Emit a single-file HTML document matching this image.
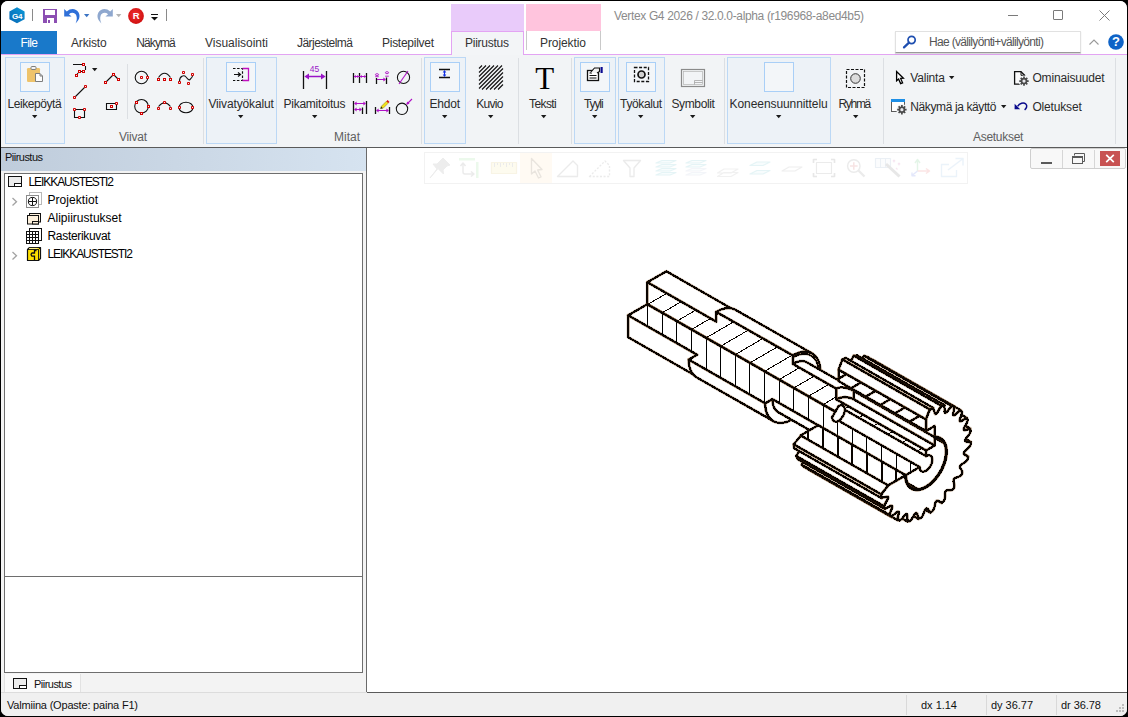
<!DOCTYPE html>
<html lang="fi">
<head>
<meta charset="utf-8">
<title>Vertex G4 2026 / 32.0.0-alpha (r196968-a8ed4b5)</title>
<style>
html,body{margin:0;padding:0;background:#000;width:1128px;height:717px;overflow:hidden}
body{font-family:"Liberation Sans",sans-serif;font-size:12px;color:#222}
#win{position:absolute;left:1px;top:1px;width:1125.5px;height:715px;background:#fff;border-radius:7px;overflow:hidden}
#win *{box-sizing:border-box}
.a{position:absolute}
.t{position:absolute;white-space:pre;font-family:"Liberation Sans",sans-serif}
svg{position:absolute;overflow:visible}
/* coordinates inside #win are offset by -1,-1 via #o */
#o{position:absolute;left:-1px;top:-1px;width:1128px;height:717px}
.grp{position:absolute;border:1px solid #bcd8f5;background:#edf2f7}
.ibox{position:absolute;border:1px solid #a9cff7;background:#f3f6f9;width:30px;height:30px}
.vsep{position:absolute;width:1px;background:#dcdfe3}
.dd{position:absolute;width:0;height:0;border-left:3px solid transparent;border-right:3px solid transparent;border-top:3px solid #222}
</style>
</head>
<body>
<div id="win"><div id="o">

<!-- ===== title bar ===== -->
<div class="a" style="left:0;top:0;width:1128px;height:31px;background:#fff"></div>
<div class="a" style="left:451px;top:4px;width:73px;height:27px;background:#e9cbfa"></div>
<div class="a" style="left:526px;top:4px;width:75px;height:27px;background:#ffc4dd"></div>
<!-- G4 logo -->
<svg style="left:9px;top:7px" width="16" height="17" viewBox="0 0 16 17">
 <defs><linearGradient id="g4g" x1="0" y1="1" x2="1" y2="0"><stop offset="0" stop-color="#0966b4"/><stop offset="1" stop-color="#0a9ad8"/></linearGradient></defs>
 <polygon points="8,0.3 15.6,4.4 15.6,12.2 8,16.3 0.4,12.2 0.4,4.4" fill="url(#g4g)"/>
 <text x="8" y="11.6" font-family="Liberation Sans, sans-serif" font-size="8" font-weight="bold" fill="#fff" text-anchor="middle" letter-spacing="-0.4">G4</text>
</svg>
<div class="a" style="left:32px;top:9px;width:1px;height:12px;background:#8a8a8a"></div>
<!-- save -->
<svg style="left:43px;top:9px" width="14" height="14" viewBox="0 0 14 14" shape-rendering="crispEdges">
 <rect x="0" y="0" width="14" height="14" fill="#8c4fb3"/>
 <rect x="2" y="1" width="10" height="5" fill="#fff"/>
 <rect x="4" y="9" width="7" height="5" fill="#fff"/>
 <rect x="5" y="11" width="2" height="3" fill="#8c4fb3"/>
</svg>
<!-- undo -->
<svg style="left:64px;top:8px" width="17" height="16" viewBox="0 0 17 16">
 <path d="M0.2,1 L0.2,8.6 L7.6,8.6 L4.9,6.2 C7.6,3.9 11.2,4.6 12.3,7.6 C13.3,10.4 12.7,13.2 11.6,15.4 C15.2,12.4 16.6,8.2 14.6,4.6 C12.2,0.4 6.6,-0.2 2.8,3.6 Z" fill="#2f70d8"/>
</svg>
<svg style="left:84px;top:14px" width="6" height="4"><polygon points="0,0 5.4,0 2.7,3.2" fill="#3b74c4"/></svg>
<!-- redo -->
<svg style="left:96px;top:8px" width="17" height="16" viewBox="0 0 17 16">
 <path transform="translate(17,0) scale(-1,1)" d="M0.2,1 L0.2,8.6 L7.6,8.6 L4.9,6.2 C7.6,3.9 11.2,4.6 12.3,7.6 C13.3,10.4 12.7,13.2 11.6,15.4 C15.2,12.4 16.6,8.2 14.6,4.6 C12.2,0.4 6.6,-0.2 2.8,3.6 Z" fill="#8fa8cf"/>
</svg>
<svg style="left:116px;top:14px" width="6" height="4"><polygon points="0,0 5.4,0 2.7,3.2" fill="#b4b4b4"/></svg>
<!-- R -->
<svg style="left:128px;top:8px" width="16" height="16" viewBox="0 0 16 16">
 <defs><radialGradient id="rg" cx="0.45" cy="0.4" r="0.6"><stop offset="0" stop-color="#f03030"/><stop offset="1" stop-color="#d01010"/></radialGradient></defs>
 <circle cx="8" cy="8" r="7.9" fill="url(#rg)"/>
 <text x="8.2" y="11.4" font-family="Liberation Sans, sans-serif" font-size="9.5" font-weight="bold" fill="#fff" text-anchor="middle">R</text>
</svg>
<!-- customize -->
<div class="a" style="left:151px;top:14px;width:7px;height:1px;background:#111"></div>
<svg style="left:151px;top:17px" width="8" height="4"><polygon points="0,0 7,0 3.5,3.5" fill="#111"/></svg>
<div class="a" style="left:166px;top:9px;width:1px;height:12px;background:#8a8a8a"></div>
<span class="t" style="left:614.00px;top:10.00px;font-size:12px;line-height:12px;letter-spacing:-0.352px;color:#8b8b8b;">Vertex G4 2026 / 32.0.0-alpha (r196968-a8ed4b5)</span>
<!-- window controls -->
<div class="a" style="left:1008px;top:15px;width:10px;height:1px;background:#7a7a7a"></div>
<div class="a" style="left:1053px;top:10px;width:10px;height:10px;border:1px solid #7a7a7a;border-radius:1px"></div>
<svg style="left:1099px;top:10px" width="11" height="11" viewBox="0 0 11 11"><path d="M0.5,0.5 L10.5,10.5 M10.5,0.5 L0.5,10.5" stroke="#7a7a7a" stroke-width="1" fill="none"/></svg>


<!-- ===== tab row ===== -->
<div class="a" style="left:1px;top:31px;width:56px;height:23px;background:#1979ca"></div>
<div class="a" style="left:1px;top:54px;width:1126px;height:1px;background:#e3a4f3"></div>
<div class="a" style="left:451px;top:31px;width:73px;height:24px;background:#f3f5f7;border:1px solid #e3a4f3;border-bottom:none"></div>
<div class="a" style="left:526px;top:31px;width:1px;height:19px;background:#c9c9c9"></div>
<div class="a" style="left:600px;top:31px;width:1px;height:19px;background:#c9c9c9"></div>
<span class="t" style="left:20.50px;top:37.00px;font-size:12px;line-height:12px;letter-spacing:-0.615px;color:#fff;">File</span>
<span class="t" style="left:71.00px;top:37.00px;font-size:12px;line-height:12px;letter-spacing:-0.165px;color:#333;">Arkisto</span>
<span class="t" style="left:136.20px;top:37.00px;font-size:12px;line-height:12px;letter-spacing:-0.883px;color:#333;">Näkymä</span>
<span class="t" style="left:205.00px;top:37.00px;font-size:12px;line-height:12px;letter-spacing:-0.013px;color:#333;">Visualisointi</span>
<span class="t" style="left:297.00px;top:37.00px;font-size:12px;line-height:12px;letter-spacing:-0.536px;color:#333;">Järjestelmä</span>
<span class="t" style="left:382.00px;top:37.00px;font-size:12px;line-height:12px;letter-spacing:-0.270px;color:#333;">Pistepilvet</span>
<span class="t" style="left:465.00px;top:37.00px;font-size:12px;line-height:12px;letter-spacing:-0.252px;color:#333;">Piirustus</span>
<span class="t" style="left:540.00px;top:37.00px;font-size:12px;line-height:12px;letter-spacing:-0.086px;color:#333;">Projektio</span>
<div class="a" style="left:895px;top:31px;width:186px;height:22px;background:#fff;border:1px solid #e1e1e1;border-bottom-color:#9a9a9a;box-shadow:0 1px 1px rgba(0,0,0,.15)"></div>
<svg style="left:903px;top:35px" width="14" height="14" viewBox="0 0 14 14"><circle cx="8.6" cy="5" r="3.6" fill="none" stroke="#1f4fb0" stroke-width="1.7"/><path d="M6,7.6 L1,12.4" stroke="#1f4fb0" stroke-width="2.2" stroke-linecap="round"/></svg>
<span class="t" style="left:929.00px;top:36.00px;font-size:12px;line-height:12px;letter-spacing:-0.669px;color:#555;">Hae (välilyönti+välilyönti)</span>
<svg style="left:1088px;top:38px" width="12" height="8" viewBox="0 0 12 8"><path d="M1.5,6.500 L6,2 L10.5,6.500" stroke="#9a9a9a" stroke-width="1.1" fill="none"/></svg>
<svg style="left:1107px;top:33px" width="18" height="18" viewBox="0 0 18 18"><circle cx="9" cy="9" r="7.8" fill="#0f63c7"/><text x="9" y="13.4" font-family="Liberation Sans, sans-serif" font-size="13" font-weight="bold" fill="#fff" text-anchor="middle">?</text></svg>


<!-- ===== ribbon ===== -->
<div class="a" style="left:1px;top:55px;width:1126px;height:92px;background:#f2f4f6"></div>
<div class="a" style="left:1px;top:147px;width:1126px;height:1px;background:#5a5a5a"></div>
<!-- group boxes -->
<div class="grp" style="left:5px;top:57px;width:60px;height:87px"></div>
<div class="grp" style="left:206px;top:57px;width:71px;height:87px"></div>
<div class="grp" style="left:424px;top:57px;width:42px;height:87px"></div>
<div class="grp" style="left:574px;top:57px;width:42px;height:87px"></div>
<div class="grp" style="left:618px;top:57px;width:47px;height:87px"></div>
<div class="grp" style="left:727px;top:57px;width:104px;height:87px"></div>
<!-- icon frames -->
<div class="ibox" style="left:20px;top:62px"></div>
<div class="ibox" style="left:226px;top:62px"></div>
<div class="ibox" style="left:430px;top:62px"></div>
<div class="ibox" style="left:580px;top:62px"></div>
<div class="ibox" style="left:626px;top:62px"></div>
<div class="ibox" style="left:764px;top:62px"></div>
<!-- separators -->
<div class="vsep" style="left:203px;top:58px;height:86px"></div>
<div class="vsep" style="left:421px;top:58px;height:86px"></div>
<div class="vsep" style="left:518px;top:58px;height:86px"></div>
<div class="vsep" style="left:571px;top:58px;height:86px"></div>
<div class="vsep" style="left:724px;top:58px;height:86px"></div>
<div class="vsep" style="left:883px;top:58px;height:86px"></div>
<div class="vsep" style="left:1115px;top:58px;height:86px"></div>
<div class="vsep" style="left:127px;top:64px;height:55px"></div>
<!-- big labels -->
<span class="t" style="left:7.50px;top:98.00px;font-size:12px;line-height:12px;letter-spacing:-0.427px;color:#2b2b2b;">Leikepöytä</span>
<span class="t" style="left:208.40px;top:98.00px;font-size:12px;line-height:12px;letter-spacing:-0.138px;color:#2b2b2b;">Viivatyökalut</span>
<span class="t" style="left:283.50px;top:98.00px;font-size:12px;line-height:12px;letter-spacing:-0.244px;color:#2b2b2b;">Pikamitoitus</span>
<span class="t" style="left:429.40px;top:98.00px;font-size:12px;line-height:12px;letter-spacing:-0.190px;color:#2b2b2b;">Ehdot</span>
<span class="t" style="left:476.20px;top:98.00px;font-size:12px;line-height:12px;letter-spacing:-0.683px;color:#2b2b2b;">Kuvio</span>
<span class="t" style="left:529.00px;top:98.00px;font-size:12px;line-height:12px;letter-spacing:-0.597px;color:#2b2b2b;">Teksti</span>
<span class="t" style="left:584.00px;top:98.00px;font-size:12px;line-height:12px;letter-spacing:-1.100px;color:#2b2b2b;">Tyyli</span>
<span class="t" style="left:620.10px;top:98.00px;font-size:12px;line-height:12px;letter-spacing:-0.386px;color:#2b2b2b;">Työkalut</span>
<span class="t" style="left:671.40px;top:98.00px;font-size:12px;line-height:12px;letter-spacing:-0.359px;color:#2b2b2b;">Symbolit</span>
<span class="t" style="left:729.60px;top:98.00px;font-size:12px;line-height:12px;letter-spacing:-0.083px;color:#2b2b2b;">Koneensuunnittelu</span>
<span class="t" style="left:838.40px;top:98.00px;font-size:12px;line-height:12px;letter-spacing:-1.279px;color:#2b2b2b;">Ryhmä</span>
<span class="t" style="left:910.30px;top:72.00px;font-size:12px;line-height:12px;letter-spacing:-0.202px;color:#2b2b2b;">Valinta</span>
<span class="t" style="left:910.30px;top:101.00px;font-size:12px;line-height:12px;letter-spacing:-0.390px;color:#2b2b2b;">Näkymä ja käyttö</span>
<span class="t" style="left:1032.40px;top:72.00px;font-size:12px;line-height:12px;letter-spacing:-0.159px;color:#2b2b2b;">Ominaisuudet</span>
<span class="t" style="left:1032.40px;top:101.00px;font-size:12px;line-height:12px;letter-spacing:-0.163px;color:#2b2b2b;">Oletukset</span>
<span class="t" style="left:119.00px;top:131.00px;font-size:12px;line-height:12px;letter-spacing:-0.228px;color:#606060;">Viivat</span>
<span class="t" style="left:334.00px;top:131.00px;font-size:12px;line-height:12px;letter-spacing:-0.004px;color:#606060;">Mitat</span>
<span class="t" style="left:973.00px;top:131.00px;font-size:12px;line-height:12px;letter-spacing:-0.288px;color:#606060;">Asetukset</span>
<!-- T icon -->
<span class="t" style="left:535.2px;top:61px;font-family:'Liberation Serif',serif;font-size:31px;line-height:36px;color:#000">T</span>

<svg style="left:0;top:0" width="1128" height="717" viewBox="0 0 1128 717">
<defs>
 <g id="ms"><rect x="-1.5" y="-1.5" width="3" height="3" fill="#d10000"/><rect x="-0.5" y="-0.5" width="1" height="1" fill="#fbeaea"/></g>
 <g id="mc"><rect x="-1.5" y="-1.5" width="3" height="3" rx="0.9" fill="#d10000"/><rect x="-0.5" y="-0.5" width="1" height="1" fill="#fbeaea"/></g>
 <polygon id="da" points="0,0 5.4,0 2.7,3.2" fill="#1a1a1a"/>
</defs>
<!-- dropdown arrows under big labels -->
<g>
<use href="#da" x="32" y="115"/><use href="#da" x="238" y="115"/><use href="#da" x="312" y="115"/>
<use href="#da" x="442" y="115"/><use href="#da" x="488" y="115"/><use href="#da" x="541" y="115"/>
<use href="#da" x="592" y="115"/><use href="#da" x="638" y="115"/><use href="#da" x="690" y="115"/>
<use href="#da" x="776" y="115"/><use href="#da" x="853" y="115"/>
<use href="#da" x="92" y="68"/>
<use href="#da" x="949" y="76"/><use href="#da" x="1001" y="105"/>
</g>
<!-- clipboard -->
<g>
 <rect x="27" y="68" width="13" height="14" rx="1.2" fill="#eec36b"/>
 <rect x="31" y="66.5" width="5" height="3" rx="1" fill="#f4f4f4" stroke="#7d7d7d" stroke-width="1"/>
 <path d="M35.5,73.5 H40 L42.5,76 V81.5 H35.5 Z" fill="#fdfdfd" stroke="#7d7d7d" stroke-width="1"/>
 <path d="M40,73.5 V76 H42.5" fill="none" stroke="#7d7d7d" stroke-width="1"/>
</g>
<!-- Viivat icons -->
<g stroke="#111" stroke-width="1.1" fill="none">
 <path d="M73,64.5 H82 M85.5,66 V70 M82,71.5 H80.5 M78,73 L77,74.5"/>
 <path d="M75.5,96.5 L84.5,87.5"/>
 <path d="M74.5,109.5 H84.5 V117.5 H74.5 Z"/>
 <path d="M106.5,81.5 L112.5,75.5 M114.5,75.5 L117.5,78.5"/>
 <path d="M106.5,103.5 H116.5 V109.5 H106.5 Z"/>
 <circle cx="141.5" cy="77.5" r="6.3"/>
 <path d="M158.5,77.5 Q164.5,69 170.5,77.5"/>
 <path d="M179.5,81 C179.5,76 184,74.5 186,77 C188,79.5 189,80.5 190,79.5 C191.5,78 192.5,77 192.5,76"/>
 <circle cx="141.5" cy="106.3" r="6.8"/>
 <path d="M158.5,106.5 Q164.5,99 170.5,106.5"/>
 <ellipse cx="186" cy="107.5" rx="7" ry="5.3"/>
</g>
<g>
 <use href="#ms" x="83.5" y="64.5"/><use href="#ms" x="83.5" y="71.5"/><use href="#ms" x="79.5" y="71.5"/><use href="#ms" x="76.5" y="75.5"/>
 <use href="#mc" x="74.5" y="97.5"/><use href="#mc" x="85.5" y="86.5"/>
 <use href="#mc" x="74.5" y="109.5"/><use href="#mc" x="84.5" y="109.5"/><use href="#mc" x="79.5" y="117.5"/>
 <use href="#ms" x="105.5" y="82.5"/><use href="#ms" x="113.5" y="74.5"/><use href="#ms" x="118.5" y="79.5"/>
 <use href="#ms" x="111.5" y="106.5"/><use href="#mc" x="116.5" y="103.5"/>
 <use href="#mc" x="141.5" y="77.5"/><use href="#mc" x="147.5" y="77.5"/>
 <use href="#ms" x="158.5" y="79.5"/><use href="#ms" x="164.5" y="79.5"/><use href="#ms" x="170.5" y="79.5"/>
 <use href="#mc" x="183.5" y="72.5"/><use href="#mc" x="192.5" y="74.5"/><use href="#mc" x="179.5" y="82.5"/><use href="#mc" x="188.5" y="83.5"/>
 <use href="#ms" x="136.5" y="102.5"/><use href="#ms" x="148.5" y="106.5"/><use href="#ms" x="141.5" y="113.5"/>
 <use href="#mc" x="158.5" y="108.5"/><use href="#mc" x="164.5" y="102.5"/><use href="#mc" x="170.5" y="108.5"/>
 <use href="#mc" x="179.5" y="107.5"/><use href="#mc" x="192.5" y="107.5"/>
</g>
<!-- Viivatyokalut icon -->
<g fill="none">
 <path d="M233,68.5 H242.5 V80.5 H233" stroke="#111" stroke-width="1.2" stroke-dasharray="2.5,1.6"/>
 <path d="M242.5,68.5 H248.5 V80.5 H242.5" stroke="#c010c0" stroke-width="1.3"/>
 <path d="M234,74.5 H241 M238,72.5 L240.5,74.5 L238,76.5" stroke="#111" stroke-width="1.2"/>
</g>
<!-- Pikamitoitus -->
<g>
 <path d="M303.5,71 V89 M326.5,71 V89" stroke="#111" stroke-width="1.3" fill="none"/>
 <path d="M307,76.5 H323" stroke="#9a14c8" stroke-width="1.5"/>
 <path d="M304.3,76.5 L309,73.4 V79.6 Z M325.700,76.5 L321,73.4 V79.6 Z" fill="#9a14c8"/>
 <text x="314.5" y="72" font-family="Liberation Sans, sans-serif" font-size="8.5" fill="#9a14c8" text-anchor="middle">45</text>
</g>
<!-- Mitat small icons -->
<g fill="none">
 <path d="M353.5,73 V83 M359.5,73 V83 M366.5,73 V83" stroke="#111" stroke-width="1.3"/>
 <path d="M354,76.5 H366" stroke="#b013c6" stroke-width="1.1"/>
 <path d="M354,76.5 l2,-1.5 v3z M359,76.5 l-2,-1.5 v3z M360,76.5 l2,-1.5 v3z M366,76.5 l-2,-1.5 v3z" fill="#b013c6"/>
 <!-- M2 -->
 <path d="M376.5,78 V84 M386.5,77.5 V84" stroke="#111" stroke-width="1.3"/>
 <path d="M377,79.5 H385" stroke="#b013c6" stroke-width="1.1"/>
 <path d="M386,79.5 l-2.6,-2 v4z" fill="#b013c6"/>
 <ellipse cx="377" cy="74.7" rx="1.6" ry="1" stroke="#b013c6" stroke-width="0.9"/>
 <ellipse cx="387" cy="72.7" rx="1.6" ry="1" stroke="#b013c6" stroke-width="0.9"/>
 <path d="M375.2,76.7 H378.8 M385.2,76.2 H388.8" stroke="#b013c6" stroke-width="0.9"/>
 <!-- M3 -->
 <circle cx="403.5" cy="77.4" r="6.1" stroke="#111" stroke-width="1.05"/>
 <path d="M399,84 L408,71" stroke="#b013c6" stroke-width="1.1"/>
 <!-- M4 -->
 <path d="M353.5,101 V114 M366.5,101 V114 M362.5,107.5 V114" stroke="#111" stroke-width="1.3"/>
 <path d="M355,103.5 H365 M355,109.5 H361" stroke="#b013c6" stroke-width="1.1"/>
 <path d="M354,103.5 l2.6,-2 v4z M366,103.5 l-2.6,-2 v4z M354,109.5 l2.6,-2 v4z M362,109.5 l-2.6,-2 v4z" fill="#b013c6"/>
 <!-- M5 -->
 <path d="M375.5,107 V114 M389.5,107 V114" stroke="#111" stroke-width="1.3"/>
 <path d="M377,110.5 H388" stroke="#b013c6" stroke-width="1.1"/>
 <path d="M376,110.5 l2.6,-2 v4z M389,110.5 l-2.6,-2 v4z" fill="#b013c6"/>
 <path d="M380.6,108.6 L381.4,106.2 L386.4,101.2 L388.3,103.1 L383.3,108.1 Z" fill="#f2e21a" stroke="#8a7a10" stroke-width="0.5"/>
 <path d="M386.4,101.2 L387.6,100 L389.5,101.9 L388.3,103.1 Z" fill="#d81010"/>
 <path d="M380.4,108.8 L381.2,106.6 L382.8,108.2 Z" fill="#222"/>
 <!-- M6 -->
 <circle cx="402" cy="108.8" r="5.7" stroke="#111" stroke-width="1.05"/>
 <path d="M412,99 L407,104" stroke="#b013c6" stroke-width="1.1"/>
 <path d="M406.2,104.8 L409.6,103.8 L407.2,101.4 Z" fill="#b013c6"/>
</g>
<!-- Ehdot -->
<g fill="none">
 <path d="M439,69.5 H450 M439,77.5 H450" stroke="#111" stroke-width="1.3"/>
 <path d="M444.5,71 V76" stroke="#1030e0" stroke-width="1.1"/>
 <path d="M444.5,70 l-1.8,2.4 h3.6z M444.5,77 l-1.8,-2.4 h3.6z" fill="#1030e0"/>
</g>
<!-- Kuvio hatch -->
<g stroke="#111" stroke-width="1.1" fill="none">
 <path d="M479,68.5 L482,65.5 M479,72.5 L486,65.5 M479,76.5 L490,65.5 M479,80.5 L494,65.5 M479,84.5 L498,65.5 M479,88.5 L502,65.5 M482,89.5 L503,68.5 M486,89.5 L503,72.5 M490,89.5 L503,76.5 M494,89.5 L503,80.5 M498,89.5 L503,84.5"/>
</g>
<!-- Tyyli -->
<g>
 <rect x="587.5" y="70.5" width="11" height="10" fill="#fff" stroke="#111" stroke-width="1.3"/>
 <path d="M589.5,75.5 H596.5 M589.5,78 H596.5 M589.5,73 H592" stroke="#111" stroke-width="1"/>
 <path d="M590.5,72.5 L594.5,68 L599.5,68 L599.5,71.5 L597,73" fill="#f0f0f0" stroke="#111" stroke-width="1.1"/>
 <rect x="600.5" y="67" width="2.2" height="6" fill="#0a0a90"/>
</g>
<!-- Tyokalut -->
<g fill="none">
 <rect x="634.5" y="67.5" width="14" height="14" stroke="#111" stroke-width="1.3" stroke-dasharray="3,1.6"/>
 <circle cx="641.5" cy="74.5" r="3.5" fill="#d0d0d0" stroke="#111" stroke-width="1.7"/>
</g>
<!-- Symbolit -->
<g fill="none" stroke="#8a8a8a">
 <rect x="681.5" y="69.5" width="23" height="17" stroke-width="1.2"/>
 <rect x="683.5" y="71.5" width="19" height="13" stroke-width="0.7" stroke="#b5b5b5"/>
 <path d="M694.5,84.5 V80.5 H702.5 M694.5,82.5 H702.5" stroke-width="0.8" stroke="#a5a5a5"/>
</g>
<!-- Ryhma -->
<g fill="none">
 <rect x="846.5" y="69.5" width="18" height="18" stroke="#111" stroke-width="1.2" stroke-dasharray="3,1.5"/>
 <circle cx="855.5" cy="78.5" r="4.8" fill="#dcdcdc" stroke="#333" stroke-width="1"/>
</g>
<!-- Valinta cursor -->
<path d="M896.6,71.6 V80.8 L898.6,79 L900.6,83.6 L902.6,82.8 L900.6,78.4 L903.4,78.2 Z" fill="#fff" stroke="#000" stroke-width="1.3" stroke-linejoin="miter"/>
<!-- Nakyma ja kaytto -->
<g>
 <rect x="891.5" y="99.5" width="13" height="12" fill="#fff" stroke="#5a5a5a" stroke-width="1"/>
 <rect x="891" y="99" width="14" height="3" fill="#1e8fe6"/>
 <circle cx="901.9" cy="109.7" r="5.6" fill="#f2f4f6"/>
 <g transform="translate(901.9,109.7)"><g stroke="#4a4a4a" stroke-width="1.7"><path d="M0,-4.7V4.7M-4.7,0H4.7M-3.3,-3.3L3.3,3.3M-3.3,3.3L3.3,-3.3"/></g><circle r="3.3" fill="#4a4a4a"/><circle r="1.6" fill="#e9e9ee"/></g>
</g>
<!-- Ominaisuudet -->
<g>
 <path d="M1014.6,71.7 H1021 L1024.6,75.3 V84.2 H1014.6 Z" fill="#fbfbfc" stroke="#111" stroke-width="1.3"/>
 <path d="M1021,71.7 V75.3 H1024.6" fill="none" stroke="#111" stroke-width="1"/>
 <circle cx="1024" cy="81.1" r="5.6" fill="#f2f4f6"/>
 <g transform="translate(1024,81.1)"><g stroke="#4a4a4a" stroke-width="1.7"><path d="M0,-4.7V4.7M-4.7,0H4.7M-3.3,-3.3L3.3,3.3M-3.3,3.3L3.3,-3.3"/></g><circle r="3.3" fill="#4a4a4a"/><circle r="1.6" fill="#e9e9ee"/></g>
</g>
<!-- Oletukset -->
<g>
 <path d="M1014.6,103.8 V109.2 H1020.2 Z" fill="#0a0a8c"/>
 <path d="M1017.6,106.4 C1019.5,103.2 1023.6,102 1025.8,104 C1027.6,105.8 1026.6,108.4 1024.6,109.8" fill="none" stroke="#0a0a8c" stroke-width="1.5"/>
</g>

</svg>


<!-- ===== left dock panel ===== -->
<div class="a" style="left:1px;top:148px;width:365px;height:544px;background:#f3f3f3"></div>
<div class="a" style="left:1px;top:148px;width:365px;height:23px;background:linear-gradient(90deg,#bfccdb,#d6e3f0)"></div>
<div class="a" style="left:366px;top:148px;width:1px;height:544px;background:#6a6a6a"></div>
<span class="t" style="left:5.00px;top:151.50px;font-size:11px;line-height:11px;letter-spacing:-0.523px;color:#111;">Piirustus</span>
<div class="a" style="left:4px;top:173px;width:359px;height:404px;background:#fff;border:1px solid #6e6e6e"></div>
<div class="a" style="left:4px;top:576px;width:359px;height:97px;background:#fff;border:1px solid #6e6e6e"></div>
<span class="t" style="left:28.50px;top:176.00px;font-size:12px;line-height:12px;letter-spacing:-1.067px;color:#000;">LEIKKAUSTESTI2</span>
<span class="t" style="left:47.50px;top:194.00px;font-size:12px;line-height:12px;letter-spacing:0.052px;color:#000;">Projektiot</span>
<span class="t" style="left:47.50px;top:212.00px;font-size:12px;line-height:12px;letter-spacing:0.005px;color:#000;">Alipiirustukset</span>
<span class="t" style="left:47.50px;top:230.00px;font-size:12px;line-height:12px;letter-spacing:-0.318px;color:#000;">Rasterikuvat</span>
<span class="t" style="left:47.50px;top:248.00px;font-size:12px;line-height:12px;letter-spacing:-1.067px;color:#000;">LEIKKAUSTESTI2</span>
<svg style="left:0;top:0" width="370" height="717" viewBox="0 0 370 717">
 <!-- row1 icon -->
 <rect x="8.5" y="176.5" width="13" height="10" fill="#ececec" stroke="#111" stroke-width="1"/>
 <rect x="14.5" y="183.5" width="7" height="3" fill="#fff" stroke="#111" stroke-width="1"/>
 <!-- chevrons -->
 <path d="M12.5,198 L16.5,201.7 L12.5,205.5 M12.5,252 L16.5,255.7 L12.5,259.5" fill="none" stroke="#a3a3a3" stroke-width="1.3"/>
 <!-- projektiot -->
 <rect x="29.5" y="192.5" width="12" height="12" fill="#fff" stroke="#b8b8b8" stroke-width="1"/>
 <rect x="26.5" y="195.5" width="12" height="12" fill="#fff" stroke="#8c8c8c" stroke-width="1"/>
 <circle cx="32.5" cy="201.5" r="4.1" fill="none" stroke="#111" stroke-width="1"/>
 <path d="M28.5,201.5 H36.5 M32.5,197.5 V205.5" stroke="#111" stroke-width="1"/>
 <!-- alipiirustukset -->
 <rect x="29.5" y="213.5" width="11" height="8.5" fill="#fdf0dc" stroke="#111" stroke-width="1"/>
 <rect x="27.5" y="215.5" width="11" height="8.5" fill="#fdf0dc" stroke="#111" stroke-width="1"/>
 <rect x="32.5" y="221.5" width="6" height="2.5" fill="#fdf0dc" stroke="#111" stroke-width="1"/>
 <!-- rasterikuvat -->
 <rect x="29.5" y="228.5" width="12" height="12" fill="#fff" stroke="#111" stroke-width="1"/>
 <rect x="26" y="231" width="13" height="13" fill="#111"/>
 <g fill="#fff">
  <rect x="27" y="232" width="2" height="2"/><rect x="30" y="232" width="2" height="2"/><rect x="33" y="232" width="2" height="2"/><rect x="36" y="232" width="2" height="2"/>
  <rect x="27" y="235" width="2" height="2"/><rect x="30" y="235" width="2" height="2"/><rect x="33" y="235" width="2" height="2"/><rect x="36" y="235" width="2" height="2"/>
  <rect x="27" y="238" width="2" height="2"/><rect x="30" y="238" width="2" height="2"/><rect x="33" y="238" width="2" height="2"/><rect x="36" y="238" width="2" height="2"/>
  <rect x="27" y="241" width="2" height="2"/><rect x="30" y="241" width="2" height="2"/><rect x="33" y="241" width="2" height="2"/><rect x="36" y="241" width="2" height="2"/>
 </g>
 <!-- model -->
 <path d="M27.5,249.5 L29.5,247.5 H40.5 V258.5 L38.5,260.5 H27.5 Z" fill="#ffe100" stroke="#111" stroke-width="1.2" stroke-linejoin="round"/>
 <path d="M27.5,249.5 H38.5 V260.5 M38.5,249.5 L40.5,247.5" fill="none" stroke="#111" stroke-width="0.9"/>
 <path d="M29,248.4 H37.5" stroke="#fff6a8" stroke-width="0.9"/>
 <path d="M36.5,250.5 H34.5 V253 H32 Q30.2,254.5 32,256.2 H34.5 V260" fill="none" stroke="#111" stroke-width="1.3"/>
 <!-- bottom tab -->
 <rect x="4" y="674" width="76" height="19" fill="#fafafa"/>
 <path d="M4.5,674 V692.5 M80.5,674 V692.5" stroke="#e2e2e2" stroke-width="1"/>
 <rect x="13.500" y="678.5" width="13" height="10" fill="#ececec" stroke="#111" stroke-width="1"/>
 <rect x="19.500" y="685.5" width="7" height="3" fill="#fff" stroke="#111" stroke-width="1"/>
</svg>
<span class="t" style="left:34.00px;top:678.50px;font-size:11px;line-height:11px;letter-spacing:-0.523px;color:#111;">Piirustus</span>


<!-- ===== viewport ===== -->
<div class="a" style="left:367px;top:148px;width:760px;height:544px;background:#fff"></div>
<div class="a" style="left:367px;top:692px;width:760px;height:1px;background:#5a5a5a"></div>
<!-- MDI child buttons -->
<div class="a" style="left:1030px;top:148px;width:96px;height:21px;background:#f8f8f8;border:1px solid #cfcfcf;border-radius:2px"></div>
<div class="a" style="left:1062px;top:150px;width:1px;height:18px;background:#d6d6d6"></div>
<div class="a" style="left:1094px;top:150px;width:1px;height:18px;background:#d6d6d6"></div>
<div class="a" style="left:1041px;top:162px;width:11px;height:2px;background:#5a5a5a"></div>
<svg style="left:1070px;top:152px" width="16" height="14" viewBox="0 0 16 14"><path d="M4.5,3.5 V1.5 H14.500 V9.5 H12.5" fill="none" stroke="#5a5a5a" stroke-width="1"/><rect x="2.5" y="4.500" width="10" height="7" fill="#f8f8f8" stroke="#5a5a5a" stroke-width="1"/><rect x="2" y="4" width="11" height="2" fill="#5a5a5a"/></svg>
<div class="a" style="left:1100px;top:151px;width:20px;height:15px;background:#c85252"></div>
<svg style="left:1105px;top:154px" width="10" height="9" viewBox="0 0 10 9"><path d="M1.2,0.8 L8.8,8.200 M8.8,0.8 L1.2,8.200" stroke="#fff" stroke-width="1.7" fill="none"/></svg>

<!-- faded floating toolbar -->
<svg style="left:0;top:0" width="1128" height="717" viewBox="0 0 1128 717">
<g opacity="0.13">
 <rect x="424.500" y="152.500" width="543" height="31" fill="none" stroke="#9a9a9a" stroke-width="1"/>
</g>
<rect x="520" y="153" width="32" height="30" fill="#fffaf3"/>
<g opacity="0.115" fill="none" stroke-linejoin="round">
 <!-- pin -->
 <path d="M443,158 L450,165 L447,166 L443,170 L443.500,174 L438,168.5 L430,178 L437,169 L433,164 L437,164 L441,160 Z" fill="#666" stroke="#666" stroke-width="1"/>
 <!-- axis -->
 <rect x="459" y="158" width="16" height="2.5" fill="#5fcf5f"/><rect x="476" y="162" width="2.500" height="16" fill="#5fcf5f"/>
 <path d="M463,163 V172 Q463,174 465,174 H474 M460.500,166 L463,163 L465.500,166 M471,171.500 L474,174 L471,176.500" stroke="#555" stroke-width="1.4"/>
 <!-- ruler -->
 <rect x="491.500" y="162.500" width="25" height="11" fill="#f6e27a" stroke="#c9a227" stroke-width="1.2"/>
 <path d="M494.500,163 V167 M497.500,163 V165 M500.500,163 V167 M503.500,163 V165 M506.500,163 V167 M509.500,163 V165 M512.500,163 V167" stroke="#555" stroke-width="1"/>
 <!-- cursor -->
 <path d="M531.500,158.500 V174 L535,171 L538.500,178 L541,176.800 L537.600,170 L542,169.500 Z" fill="#fff" stroke="#444" stroke-width="1.3"/>
 <!-- polygon -->
 <path d="M557.500,176.500 L573,161 L577.500,165.500 V176.500 Z" stroke="#555" stroke-width="1.3"/>
 <path d="M589.500,176.500 L605,161 L609.500,165.500 V176.500 Z" stroke="#555" stroke-width="1.3" stroke-dasharray="2,1.6"/>
 <!-- funnel -->
 <path d="M623.500,160.500 H640.500 L634,168 V176.500 H630 V168 Z" stroke="#555" stroke-width="1.3"/>
 <!-- layers -->
 <g stroke="#25a8b8" stroke-width="1.2" fill="#bfeaf0">
  <path d="M656,163 L662,160.500 H676 L670,163 Z M656,167 L662,164.500 H676 L670,167 Z M656,171 L662,168.500 H676 L670,171 Z M656,175 L662,172.500 H676 L670,175 Z"/>
 </g>
 <g stroke="#25a8b8" stroke-width="1.2" fill="#d8f2f5">
  <path d="M686,163 L692,160.500 H706 L700,163 Z M686,167 L692,164.500 H706 L700,167 Z" />
  <path d="M686,171 L692,168.500 H706 L700,171 Z M686,175 L692,172.500 H706 L700,175 Z" stroke="#9ac" />
 </g>
 <path d="M717.500,173 L724,169 H738 L731,173 Z M717.500,176.500 L724,172.500 H738 L731,176.500 Z" stroke="#8a8a8a" stroke-width="1.1"/>
 <path d="M750,165.500 L757,162 H770 L763,165.500 Z M750,174 L757,170.500 H770 L763,174 Z" stroke="#25a8b8" stroke-width="1.2" fill="#bfeaf0"/>
 <path d="M782,171 L789,167 H802 L795,171 Z" stroke="#777" stroke-width="1.1"/>
 <!-- frame -->
 <rect x="816.500" y="162.500" width="15" height="11" stroke="#555" stroke-width="1.1"/>
 <path d="M813.500,163 V159.500 H817 M831,159.500 H834.500 V163 M834.500,173 V176.500 H831 M817,176.500 H813.500 V173" stroke="#333" stroke-width="1.6"/>
 <!-- zoom -->
 <circle cx="853.800" cy="166" r="6.200" stroke="#555" stroke-width="1.4"/>
 <path d="M858.500,170.500 L864.500,176.500" stroke="#555" stroke-width="2.2"/>
 <path d="M850,166 H857.600 M853.800,162.200 V169.800" stroke="#c01818" stroke-width="1.5"/>
 <!-- wand -->
 <rect x="875.500" y="158.500" width="15" height="9" stroke="#5a7fb0" stroke-width="1.1" fill="#dfe9f5"/>
 <path d="M880.500,158.500 V167.500 M885.500,158.500 V167.500" stroke="#5a7fb0" stroke-width="1"/>
 <path d="M886,164 L899.500,176.500" stroke="#333" stroke-width="3"/>
 <path d="M893,160 l2,2 m0,-2 l-2,2 M898,163 l2,2 m0,-2 l-2,2 M896,168 l1.5,1.5" stroke="#c03090" stroke-width="1.1"/>
 <!-- axes -->
 <path d="M917.500,171 V160 M915,163 L917.500,159.500 L920,163" stroke="#20b040" stroke-width="1.4"/>
 <path d="M917.500,171 H929 M926,168.500 L929.500,171 L926,173.500" stroke="#e02020" stroke-width="1.4"/>
 <path d="M917.500,171 L912,175.500 M912,172.500 V175.800 H915.500" stroke="#2040e0" stroke-width="1.4"/>
 <!-- external -->
 <path d="M949,164.500 H941.500 V176.500 H956.500 V170" stroke="#5a9ad8" stroke-width="1.3"/>
 <path d="M948,170 L962.500,159 M955.500,158.500 H963 V165.500" stroke="#5a9ad8" stroke-width="1.5"/>
</g>
<g stroke-linejoin="round" stroke-linecap="round" shape-rendering="crispEdges">
<path d="M647.3,282.3 L666.4,271.3 L735.3,310.7 L716.2,321.7 Z" fill="#fff" stroke="rgba(96,56,16,0.5)" stroke-width="2.90" shape-rendering="auto"/>
<path d="M647.3,282.3 L666.4,271.3 L735.3,310.7 L716.2,321.7 Z" fill="none" stroke="#0a0400" stroke-width="2.00"/>
<path d="M628.2,315.3 L628.2,337.3 L697.2,376.7 L697.2,354.7 Z" fill="#fff" stroke="rgba(96,56,16,0.5)" stroke-width="2.90" shape-rendering="auto"/>
<path d="M628.2,315.3 L628.2,337.3 L697.2,376.7 L697.2,354.7 Z" fill="none" stroke="#0a0400" stroke-width="2.00"/>
<path d="M716.2,311.9 L717.1,311.4 L718.0,310.9 L718.9,310.5 L719.8,310.1 L720.7,309.7 L721.6,309.4 L722.5,309.1 L723.4,308.8 L724.2,308.6 L725.1,308.4 L725.9,308.3 L726.8,308.2 L727.6,308.1 L728.4,308.1 L729.2,308.1 L730.0,308.2 L730.8,308.3 L731.5,308.4 L732.3,308.6 L733.0,308.8 L733.7,309.0 L734.4,309.3 L735.1,309.6 L735.7,309.9 L812.3,353.6 L811.6,353.3 L810.9,353.0 L810.3,352.7 L809.6,352.5 L808.8,352.3 L808.1,352.1 L807.3,352.0 L806.6,351.9 L805.8,351.8 L805.0,351.8 L804.2,351.8 L803.3,351.9 L802.5,352.0 L801.6,352.2 L800.8,352.3 L799.9,352.5 L799.0,352.8 L798.2,353.1 L797.3,353.4 L796.4,353.8 L795.5,354.2 L794.6,354.6 L793.7,355.1 L792.8,355.6 Z" fill="#fff" stroke="rgba(96,56,16,0.5)" stroke-width="2.90" shape-rendering="auto"/>
<path d="M716.2,311.9 L717.1,311.4 L718.0,310.9 L718.9,310.5 L719.8,310.1 L720.7,309.7 L721.6,309.4 L722.5,309.1 L723.4,308.8 L724.2,308.6 L725.1,308.4 L725.9,308.3 L726.8,308.2 L727.6,308.1 L728.4,308.1 L729.2,308.1 L730.0,308.2 L730.8,308.3 L731.5,308.4 L732.3,308.6 L733.0,308.8 L733.7,309.0 L734.4,309.3 L735.1,309.6 L735.7,309.9 L812.3,353.6 L811.6,353.3 L810.9,353.0 L810.3,352.7 L809.6,352.5 L808.8,352.3 L808.1,352.1 L807.3,352.0 L806.6,351.9 L805.8,351.8 L805.0,351.8 L804.2,351.8 L803.3,351.9 L802.5,352.0 L801.6,352.2 L800.8,352.3 L799.9,352.5 L799.0,352.8 L798.2,353.1 L797.3,353.4 L796.4,353.8 L795.5,354.2 L794.6,354.6 L793.7,355.1 L792.8,355.6 Z" fill="none" stroke="#0a0400" stroke-width="2.00"/>
<path d="M688.7,359.6 L688.7,360.6 L688.8,361.6 L688.8,362.6 L688.9,363.6 L689.1,364.5 L689.2,365.5 L689.4,366.4 L689.6,367.3 L689.9,368.1 L690.2,368.9 L690.5,369.7 L690.8,370.5 L691.1,371.3 L691.5,372.0 L691.9,372.7 L692.4,373.3 L692.8,374.0 L693.3,374.5 L693.8,375.1 L694.4,375.6 L694.9,376.1 L695.5,376.6 L696.1,377.0 L696.8,377.4 L773.3,421.1 L772.7,420.7 L772.1,420.3 L771.5,419.8 L770.9,419.3 L770.4,418.8 L769.9,418.3 L769.4,417.7 L768.9,417.0 L768.5,416.4 L768.1,415.7 L767.7,415.0 L767.3,414.2 L767.0,413.5 L766.7,412.7 L766.4,411.8 L766.2,411.0 L766.0,410.1 L765.8,409.2 L765.6,408.2 L765.5,407.3 L765.4,406.3 L765.3,405.3 L765.3,404.3 L765.2,403.3 Z" fill="#fff" stroke="rgba(96,56,16,0.5)" stroke-width="2.90" shape-rendering="auto"/>
<path d="M688.7,359.6 L688.7,360.6 L688.8,361.6 L688.8,362.6 L688.9,363.6 L689.1,364.5 L689.2,365.5 L689.4,366.4 L689.6,367.3 L689.9,368.1 L690.2,368.9 L690.5,369.7 L690.8,370.5 L691.1,371.3 L691.5,372.0 L691.9,372.7 L692.4,373.3 L692.8,374.0 L693.3,374.5 L693.8,375.1 L694.4,375.6 L694.9,376.1 L695.5,376.6 L696.1,377.0 L696.8,377.4 L773.3,421.1 L772.7,420.7 L772.1,420.3 L771.5,419.8 L770.9,419.3 L770.4,418.8 L769.9,418.3 L769.4,417.7 L768.9,417.0 L768.5,416.4 L768.1,415.7 L767.7,415.0 L767.3,414.2 L767.0,413.5 L766.7,412.7 L766.4,411.8 L766.2,411.0 L766.0,410.1 L765.8,409.2 L765.6,408.2 L765.5,407.3 L765.4,406.3 L765.3,405.3 L765.3,404.3 L765.2,403.3 Z" fill="none" stroke="#0a0400" stroke-width="2.00"/>
<path d="M792.8,387.4 L792.8,355.6 L794.9,354.4 L797.1,353.5 L799.2,352.7 L801.3,352.2 L803.3,351.9 L805.3,351.8 L807.2,352.0 L809.0,352.3 L810.7,352.9 L812.3,353.6 L813.7,354.6 L815.1,355.8 L816.3,357.2 L817.3,358.8 L818.2,360.5 L819.0,362.4 L819.6,364.5 L820.0,366.7 L820.2,369.0 L820.3,371.5 L820.2,374.0 L820.0,376.6 L819.6,379.3 L819.0,382.1 L818.2,384.9 L817.3,387.6 L816.3,390.4 L815.1,393.2 L813.7,395.9 L812.3,398.6 L810.7,401.2 L809.0,403.8 L807.2,406.2 L805.3,408.5 L803.3,410.7 L801.3,412.7 L799.2,414.6 L797.1,416.3 L794.9,417.8 L792.8,419.2 L790.6,420.3 L788.5,421.3 L786.4,422.0 L784.3,422.5 L782.2,422.8 L780.3,422.9 L778.4,422.8 L776.6,422.4 L774.9,421.9 L773.3,421.1 L771.8,420.1 L770.5,418.9 L769.3,417.5 L768.3,416.0 L767.3,414.2 L766.6,412.3 L766.0,410.3 L765.6,408.1 L765.3,405.7 L765.2,403.3 Z" fill="#fff" stroke="rgba(96,56,16,0.5)" stroke-width="2.90" shape-rendering="auto"/>
<path d="M792.8,387.4 L792.8,355.6 L794.9,354.4 L797.1,353.5 L799.2,352.7 L801.3,352.2 L803.3,351.9 L805.3,351.8 L807.2,352.0 L809.0,352.3 L810.7,352.9 L812.3,353.6 L813.7,354.6 L815.1,355.8 L816.3,357.2 L817.3,358.8 L818.2,360.5 L819.0,362.4 L819.6,364.5 L820.0,366.7 L820.2,369.0 L820.3,371.5 L820.2,374.0 L820.0,376.6 L819.6,379.3 L819.0,382.1 L818.2,384.9 L817.3,387.6 L816.3,390.4 L815.1,393.2 L813.7,395.9 L812.3,398.6 L810.7,401.2 L809.0,403.8 L807.2,406.2 L805.3,408.5 L803.3,410.7 L801.3,412.7 L799.2,414.6 L797.1,416.3 L794.9,417.8 L792.8,419.2 L790.6,420.3 L788.5,421.3 L786.4,422.0 L784.3,422.5 L782.2,422.8 L780.3,422.9 L778.4,422.8 L776.6,422.4 L774.9,421.9 L773.3,421.1 L771.8,420.1 L770.5,418.9 L769.3,417.5 L768.3,416.0 L767.3,414.2 L766.6,412.3 L766.0,410.3 L765.6,408.1 L765.3,405.7 L765.2,403.3 Z" fill="none" stroke="#0a0400" stroke-width="2.00"/>
<path d="M792.8,357.5 L794.0,356.8 L795.2,356.2 L796.4,355.7 L797.6,355.2 L798.8,354.8 L799.9,354.5 L801.1,354.3 L802.2,354.1 L803.3,354.0 L804.4,353.9 L805.5,354.0 L806.5,354.1 L807.5,354.3 L808.5,354.5 L809.4,354.9 L810.3,355.3 L811.2,355.7 L812.0,356.3 L812.8,356.9 L813.6,357.5 L814.3,358.3 L814.9,359.1 L815.5,359.9 L816.1,360.8 L816.6,361.8 L817.0,362.8 L817.4,363.9 L817.8,365.1 L818.1,366.2 L818.3,367.5" fill="none" stroke="rgba(96,56,16,0.5)" stroke-width="2.50" shape-rendering="auto"/>
<path d="M792.8,357.5 L794.0,356.8 L795.2,356.2 L796.4,355.7 L797.6,355.2 L798.8,354.8 L799.9,354.5 L801.1,354.3 L802.2,354.1 L803.3,354.0 L804.4,353.9 L805.5,354.0 L806.5,354.1 L807.5,354.3 L808.5,354.5 L809.4,354.9 L810.3,355.3 L811.2,355.7 L812.0,356.3 L812.8,356.9 L813.6,357.5 L814.3,358.3 L814.9,359.1 L815.5,359.9 L816.1,360.8 L816.6,361.8 L817.0,362.8 L817.4,363.9 L817.8,365.1 L818.1,366.2 L818.3,367.5" fill="none" stroke="#0a0400" stroke-width="1.60"/>
<path d="M792.8,363.9 L793.5,363.5 L794.1,363.2 L794.8,362.8 L795.4,362.5 L796.1,362.3 L796.8,362.0 L797.4,361.8 L798.1,361.6 L798.7,361.5 L799.3,361.3 L800.0,361.2 L800.6,361.2 L801.2,361.1 L801.8,361.1 L802.4,361.1 L803.0,361.1 L803.5,361.2 L804.1,361.3 L804.6,361.4 L805.2,361.6 L805.7,361.8 L806.2,362.0 L806.7,362.2 L807.2,362.5 L852.9,388.6 L852.4,388.3 L851.9,388.1 L851.4,387.9 L850.9,387.7 L850.4,387.5 L849.8,387.4 L849.3,387.3 L848.7,387.3 L848.1,387.2 L847.5,387.2 L846.9,387.2 L846.3,387.3 L845.7,387.4 L845.1,387.5 L844.4,387.6 L843.8,387.7 L843.1,387.9 L842.5,388.1 L841.8,388.4 L841.2,388.7 L840.5,388.9 L839.8,389.3 L839.2,389.6 L838.5,390.0 Z" fill="#fff" stroke="rgba(96,56,16,0.5)" stroke-width="2.90" shape-rendering="auto"/>
<path d="M792.8,363.9 L793.5,363.5 L794.1,363.2 L794.8,362.8 L795.4,362.5 L796.1,362.3 L796.8,362.0 L797.4,361.8 L798.1,361.6 L798.7,361.5 L799.3,361.3 L800.0,361.2 L800.6,361.2 L801.2,361.1 L801.8,361.1 L802.4,361.1 L803.0,361.1 L803.5,361.2 L804.1,361.3 L804.6,361.4 L805.2,361.6 L805.7,361.8 L806.2,362.0 L806.7,362.2 L807.2,362.5 L852.9,388.6 L852.4,388.3 L851.9,388.1 L851.4,387.9 L850.9,387.7 L850.4,387.5 L849.8,387.4 L849.3,387.3 L848.7,387.3 L848.1,387.2 L847.5,387.2 L846.9,387.2 L846.3,387.3 L845.7,387.4 L845.1,387.5 L844.4,387.6 L843.8,387.7 L843.1,387.9 L842.5,388.1 L841.8,388.4 L841.2,388.7 L840.5,388.9 L839.8,389.3 L839.2,389.6 L838.5,390.0 Z" fill="none" stroke="#0a0400" stroke-width="2.00"/>
<path d="M772.4,399.1 L772.4,399.9 L772.5,400.6 L772.5,401.4 L772.6,402.1 L772.7,402.8 L772.8,403.5 L773.0,404.2 L773.1,404.8 L773.3,405.4 L773.5,406.1 L773.7,406.7 L774.0,407.2 L774.3,407.8 L774.5,408.3 L774.8,408.8 L775.2,409.3 L775.5,409.8 L775.9,410.2 L776.2,410.6 L776.6,411.0 L777.1,411.4 L777.5,411.7 L777.9,412.0 L778.4,412.3 L824.1,438.4 L823.7,438.1 L823.2,437.8 L822.8,437.5 L822.4,437.1 L822.0,436.7 L821.6,436.3 L821.2,435.9 L820.9,435.4 L820.6,434.9 L820.3,434.4 L820.0,433.9 L819.7,433.3 L819.5,432.8 L819.2,432.2 L819.0,431.6 L818.9,430.9 L818.7,430.3 L818.6,429.6 L818.4,428.9 L818.3,428.2 L818.3,427.5 L818.2,426.7 L818.2,426.0 L818.2,425.2 Z" fill="#fff" stroke="rgba(96,56,16,0.5)" stroke-width="2.90" shape-rendering="auto"/>
<path d="M772.4,399.1 L772.4,399.9 L772.5,400.6 L772.5,401.4 L772.6,402.1 L772.7,402.8 L772.8,403.5 L773.0,404.2 L773.1,404.8 L773.3,405.4 L773.5,406.1 L773.7,406.7 L774.0,407.2 L774.3,407.8 L774.5,408.3 L774.8,408.8 L775.2,409.3 L775.5,409.8 L775.9,410.2 L776.2,410.6 L776.6,411.0 L777.1,411.4 L777.5,411.7 L777.9,412.0 L778.4,412.3 L824.1,438.4 L823.7,438.1 L823.2,437.8 L822.8,437.5 L822.4,437.1 L822.0,436.7 L821.6,436.3 L821.2,435.9 L820.9,435.4 L820.6,434.9 L820.3,434.4 L820.0,433.9 L819.7,433.3 L819.5,432.8 L819.2,432.2 L819.0,431.6 L818.9,430.9 L818.7,430.3 L818.6,429.6 L818.4,428.9 L818.3,428.2 L818.3,427.5 L818.2,426.7 L818.2,426.0 L818.2,425.2 Z" fill="none" stroke="#0a0400" stroke-width="2.00"/>
<path d="M854.3,453.1 L941.7,503.0 L935.9,499.4 L848.4,449.4 Z" fill="#fff" stroke="rgba(96,56,16,0.5)" stroke-width="2.90" shape-rendering="auto"/>
<path d="M854.3,453.1 L941.7,503.0 L935.9,499.4 L848.4,449.4 Z" fill="none" stroke="#0a0400" stroke-width="2.00"/>
<path d="M874.7,403.5 L962.2,453.5 L968.3,456.6 L880.9,406.6 Z" fill="#fff" stroke="rgba(96,56,16,0.5)" stroke-width="2.90" shape-rendering="auto"/>
<path d="M874.7,403.5 L962.2,453.5 L968.3,456.6 L880.9,406.6 Z" fill="none" stroke="#0a0400" stroke-width="2.00"/>
<path d="M842.8,462.8 L930.3,512.7 L926.2,506.5 L838.7,456.6 Z" fill="#fff" stroke="rgba(96,56,16,0.5)" stroke-width="2.90" shape-rendering="auto"/>
<path d="M842.8,462.8 L930.3,512.7 L926.2,506.5 L838.7,456.6 Z" fill="none" stroke="#0a0400" stroke-width="2.00"/>
<path d="M875.9,391.6 L963.4,441.6 L970.9,441.9 L883.4,391.9 Z" fill="#fff" stroke="rgba(96,56,16,0.5)" stroke-width="2.90" shape-rendering="auto"/>
<path d="M875.9,391.6 L963.4,441.6 L970.9,441.9 L883.4,391.9 Z" fill="none" stroke="#0a0400" stroke-width="2.00"/>
<path d="M831.1,469.1 L918.5,519.0 L916.5,510.7 L829.1,460.7 Z" fill="#fff" stroke="rgba(96,56,16,0.5)" stroke-width="2.90" shape-rendering="auto"/>
<path d="M831.1,469.1 L918.5,519.0 L916.5,510.7 L829.1,460.7 Z" fill="none" stroke="#0a0400" stroke-width="2.00"/>
<path d="M874.6,381.2 L962.1,431.2 L970.3,428.6 L882.8,378.7 Z" fill="#fff" stroke="rgba(96,56,16,0.5)" stroke-width="2.90" shape-rendering="auto"/>
<path d="M874.6,381.2 L962.1,431.2 L970.3,428.6 L882.8,378.7 Z" fill="none" stroke="#0a0400" stroke-width="2.00"/>
<path d="M819.8,471.6 L907.3,521.5 L907.5,511.7 L820.0,461.7 Z" fill="#fff" stroke="rgba(96,56,16,0.5)" stroke-width="2.90" shape-rendering="auto"/>
<path d="M819.8,471.6 L907.3,521.5 L907.5,511.7 L820.0,461.7 Z" fill="none" stroke="#0a0400" stroke-width="2.00"/>
<path d="M870.8,373.0 L958.3,423.0 L966.7,417.8 L879.3,367.8 Z" fill="#fff" stroke="rgba(96,56,16,0.5)" stroke-width="2.90" shape-rendering="auto"/>
<path d="M870.8,373.0 L958.3,423.0 L966.7,417.8 L879.3,367.8 Z" fill="none" stroke="#0a0400" stroke-width="2.00"/>
<path d="M809.9,470.1 L897.3,520.1 L899.7,509.3 L812.2,459.4 Z" fill="#fff" stroke="rgba(96,56,16,0.5)" stroke-width="2.90" shape-rendering="auto"/>
<path d="M809.9,470.1 L897.3,520.1 L899.7,509.3 L812.2,459.4 Z" fill="none" stroke="#0a0400" stroke-width="2.00"/>
<path d="M864.8,367.6 L952.3,417.5 L960.4,410.0 L872.9,360.1 Z" fill="#fff" stroke="rgba(96,56,16,0.5)" stroke-width="2.90" shape-rendering="auto"/>
<path d="M864.8,367.6 L952.3,417.5 L960.4,410.0 L872.9,360.1 Z" fill="none" stroke="#0a0400" stroke-width="2.00"/>
<path d="M804.1,466.9 L891.6,516.9 L889.3,514.8 L801.9,464.8 Z" fill="#fff" stroke="rgba(96,56,16,0.5)" stroke-width="2.90" shape-rendering="auto"/>
<path d="M804.1,466.9 L891.6,516.9 L889.3,514.8 L801.9,464.8 Z" fill="none" stroke="#0a0400" stroke-width="2.00"/>
<path d="M864.2,355.9 L951.7,405.9 L954.6,406.8 L867.2,356.8 Z" fill="#fff" stroke="rgba(96,56,16,0.5)" stroke-width="2.90" shape-rendering="auto"/>
<path d="M864.2,355.9 L951.7,405.9 L954.6,406.8 L867.2,356.8 Z" fill="none" stroke="#0a0400" stroke-width="2.00"/>
<path d="M801.9,464.8 L889.3,514.8 L893.7,503.9 L806.2,454.0 Z" fill="#fff" stroke="rgba(96,56,16,0.5)" stroke-width="2.90" shape-rendering="auto"/>
<path d="M801.9,464.8 L889.3,514.8 L893.7,503.9 L806.2,454.0 Z" fill="none" stroke="#0a0400" stroke-width="2.00"/>
<path d="M857.0,365.3 L944.5,415.2 L951.7,405.9 L864.2,355.9 Z" fill="#fff" stroke="rgba(96,56,16,0.5)" stroke-width="2.90" shape-rendering="auto"/>
<path d="M857.0,365.3 L944.5,415.2 L951.7,405.9 L864.2,355.9 Z" fill="none" stroke="#0a0400" stroke-width="2.00"/>
<path d="M797.8,459.2 L885.2,509.1 L883.8,506.0 L796.3,456.0 Z" fill="#fff" stroke="rgba(96,56,16,0.5)" stroke-width="2.90" shape-rendering="auto"/>
<path d="M797.8,459.2 L885.2,509.1 L883.8,506.0 L796.3,456.0 Z" fill="none" stroke="#0a0400" stroke-width="2.00"/>
<path d="M853.8,355.8 L941.2,405.7 L944.7,405.3 L857.2,355.4 Z" fill="#fff" stroke="rgba(96,56,16,0.5)" stroke-width="2.90" shape-rendering="auto"/>
<path d="M853.8,355.8 L941.2,405.7 L944.7,405.3 L857.2,355.4 Z" fill="none" stroke="#0a0400" stroke-width="2.00"/>
<path d="M796.3,456.0 L883.8,506.0 L889.9,495.7 L802.4,445.8 Z" fill="#fff" stroke="rgba(96,56,16,0.5)" stroke-width="2.90" shape-rendering="auto"/>
<path d="M796.3,456.0 L883.8,506.0 L889.9,495.7 L802.4,445.8 Z" fill="none" stroke="#0a0400" stroke-width="2.00"/>
<path d="M848.0,366.2 L935.4,416.2 L941.2,405.7 L853.8,355.8 Z" fill="#fff" stroke="rgba(96,56,16,0.5)" stroke-width="2.90" shape-rendering="auto"/>
<path d="M848.0,366.2 L935.4,416.2 L941.2,405.7 L853.8,355.8 Z" fill="none" stroke="#0a0400" stroke-width="2.00"/>
<path d="M794.2,448.3 L881.7,498.2 L881.2,494.3 L793.7,444.3 Z" fill="#fff" stroke="rgba(96,56,16,0.5)" stroke-width="2.90" shape-rendering="auto"/>
<path d="M794.2,448.3 L881.7,498.2 L881.2,494.3 L793.7,444.3 Z" fill="none" stroke="#0a0400" stroke-width="2.00"/>
<path d="M793.7,444.3 L881.2,494.3 L888.6,485.3 L801.1,435.3 Z" fill="#fff" stroke="rgba(96,56,16,0.5)" stroke-width="2.90" shape-rendering="auto"/>
<path d="M793.7,444.3 L881.2,494.3 L888.6,485.3 L801.1,435.3 Z" fill="none" stroke="#0a0400" stroke-width="2.00"/>
<path d="M842.3,359.5 L929.7,409.4 L933.4,407.9 L845.9,357.9 Z" fill="#fff" stroke="rgba(96,56,16,0.5)" stroke-width="2.90" shape-rendering="auto"/>
<path d="M842.3,359.5 L929.7,409.4 L933.4,407.9 L845.9,357.9 Z" fill="none" stroke="#0a0400" stroke-width="2.00"/>
<path d="M838.6,369.7 L926.0,419.6 L929.7,409.4 L842.3,359.5 Z" fill="#fff" stroke="rgba(96,56,16,0.5)" stroke-width="2.90" shape-rendering="auto"/>
<path d="M838.6,369.7 L926.0,419.6 L929.7,409.4 L842.3,359.5 Z" fill="none" stroke="#0a0400" stroke-width="2.00"/>
<path d="M926.0,419.6 L926.3,419.0 L926.7,417.7 L927.4,415.8 L928.4,413.3 L929.3,411.2 L930.2,409.8 L931.1,408.8 L932.0,408.4 L932.9,408.7 L933.6,409.5 L934.2,411.0 L934.7,413.1 L935.4,414.0 L936.4,413.7 L937.6,412.2 L939.1,409.6 L940.4,407.6 L941.5,406.3 L942.5,405.6 L943.4,405.5 L944.0,406.0 L944.4,407.2 L944.6,409.0 L944.5,411.5 L945.0,412.8 L945.8,412.8 L947.2,411.7 L949.0,409.4 L950.5,407.7 L951.8,406.6 L952.8,406.2 L953.5,406.4 L953.9,407.3 L954.0,408.7 L953.7,410.8 L953.2,413.5 L953.2,415.0 L953.9,415.4 L955.3,414.7 L957.3,412.8 L959.0,411.5 L960.3,410.9 L961.2,410.8 L961.8,411.3 L961.9,412.4 L961.7,414.0 L961.0,416.2 L959.9,418.9 L959.6,420.6 L960.1,421.3 L961.4,421.0 L963.6,419.7 L965.2,418.9 L966.5,418.7 L967.3,418.9 L967.6,419.7 L967.5,420.9 L966.9,422.6 L965.9,424.7 L964.3,427.3 L963.7,429.1 L964.0,430.0 L965.1,430.2 L967.2,429.6 L968.8,429.4 L969.9,429.5 L970.5,430.1 L970.6,431.1 L970.2,432.4 L969.4,434.0 L968.0,435.9 L966.2,438.2 L965.2,439.9 L965.3,441.1 L966.2,441.7 L968.1,441.8 L969.4,442.1 L970.3,442.7 L970.7,443.6 L970.6,444.7 L970.0,446.0 L968.9,447.4 L967.3,449.0 L965.3,450.8 L964.1,452.3 L963.8,453.6 L964.5,454.6 L966.0,455.4 L967.1,456.3 L967.7,457.3 L967.8,458.4 L967.5,459.6 L966.7,460.7 L965.5,461.9 L963.8,463.1 L961.7,464.3 L960.4,465.5 L959.9,466.8 L960.2,468.2 L961.3,469.6 L962.0,471.0 L962.3,472.3 L962.1,473.5 L961.6,474.7 L960.6,475.7 L959.3,476.5 L957.7,477.2 L955.6,477.7 L954.3,478.5 L953.6,479.8 L953.5,481.4 L954.1,483.4 L954.4,485.1 L954.3,486.7 L954.0,488.0 L953.2,489.1 L952.2,489.8 L951.0,490.2 L949.4,490.3 L947.6,490.1 L946.3,490.6 L945.4,491.7 L945.0,493.4 L945.1,495.8 L944.9,497.8 L944.5,499.5 L943.9,500.8 L943.0,501.7 L942.0,502.1 L940.9,502.1 L939.5,501.7 L938.1,500.7 L936.9,500.7 L935.9,501.6 L935.2,503.4 L934.7,506.0 L934.1,508.2 L933.4,509.8 L932.6,511.0 L931.7,511.7 L930.7,511.8 L929.8,511.4 L928.8,510.4 L927.7,508.8 L926.7,508.3 L925.7,508.9 L924.7,510.6 L923.7,513.3 L922.7,515.5 L921.8,517.0 L920.8,518.0 L919.9,518.4 L919.1,518.2 L918.4,517.3 L917.8,515.9 L917.3,513.8 L916.5,512.9 L915.6,513.2 L914.3,514.6 L912.9,517.2 L911.6,519.2 L910.4,520.6 L909.4,521.3 L908.6,521.4 L908.0,520.8 L907.5,519.7 L907.4,517.8 L907.4,515.4 L907.0,514.1 L906.1,514.0 L904.8,515.2 L903.0,517.5 L901.4,519.2 L900.2,520.2 L899.2,520.6 L898.4,520.4 L898.0,519.6 L898.0,518.1 L898.2,516.1 L898.8,513.4 L898.7,511.8 L898.0,511.4 L896.6,512.2 L894.6,514.0 L893.0,515.3 L891.7,516.0 L890.7,516.1 L890.2,515.6 L890.0,514.5 L890.3,512.9 L891.0,510.7 L892.1,508.0 L892.3,506.3 L891.8,505.6 L890.5,505.8 L888.4,507.1 L886.7,507.9 L885.5,508.2 L884.7,507.9 L884.3,507.2 L884.4,505.9 L885.0,504.3 L886.1,502.1 L887.6,499.6 L888.2,497.8 L888.0,496.8 L886.8,496.6 L884.7,497.3 L883.2,497.5 L882.1,497.3 L881.5,496.8 L881.3,495.8 L881.7,494.5 L882.6,492.9 L883.9,490.9 L885.8,488.7 L887.1,487.0 L888.0,485.9 L888.4,485.3 L888.3,485.3 L888.2,485.3 L888.1,485.3 L888.1,485.3 L905.6,475.2 L905.7,476.8 L905.8,478.4 L906.1,479.9 L906.4,481.3 L906.9,482.6 L907.5,483.9 L908.1,485.0 L908.8,486.0 L909.7,486.9 L910.6,487.7 L911.6,488.3 L912.6,488.9 L913.7,489.3 L914.9,489.5 L916.2,489.7 L917.5,489.7 L918.8,489.6 L920.2,489.3 L921.6,488.9 L923.0,488.4 L924.4,487.7 L925.9,487.0 L927.3,486.1 L928.8,485.1 L930.2,484.0 L931.6,482.8 L933.0,481.4 L934.3,480.0 L935.6,478.5 L936.9,477.0 L938.1,475.3 L939.2,473.6 L940.3,471.9 L941.3,470.1 L942.2,468.3 L943.0,466.4 L943.8,464.6 L944.4,462.7 L945.0,460.8 L945.5,459.0 L945.8,457.1 L946.1,455.3 L946.3,453.6 L946.3,451.9 L946.3,450.2 L946.1,448.6 L945.9,447.1 L945.6,445.7 L945.1,444.4 L944.6,443.1 L943.9,442.0 L943.2,441.0 L942.4,440.1 L941.5,439.3 L940.5,438.6 L939.5,438.0 L938.3,437.6 L937.2,437.3 L935.9,437.2 L934.6,437.2 L934.6,426.0 L926.0,431.0 Z" fill="#fff" stroke="rgba(96,56,16,0.5)" stroke-width="2.90" shape-rendering="auto"/>
<path d="M926.0,419.6 L926.3,419.0 L926.7,417.7 L927.4,415.8 L928.4,413.3 L929.3,411.2 L930.2,409.8 L931.1,408.8 L932.0,408.4 L932.9,408.7 L933.6,409.5 L934.2,411.0 L934.7,413.1 L935.4,414.0 L936.4,413.7 L937.6,412.2 L939.1,409.6 L940.4,407.6 L941.5,406.3 L942.5,405.6 L943.4,405.5 L944.0,406.0 L944.4,407.2 L944.6,409.0 L944.5,411.5 L945.0,412.8 L945.8,412.8 L947.2,411.7 L949.0,409.4 L950.5,407.7 L951.8,406.6 L952.8,406.2 L953.5,406.4 L953.9,407.3 L954.0,408.7 L953.7,410.8 L953.2,413.5 L953.2,415.0 L953.9,415.4 L955.3,414.7 L957.3,412.8 L959.0,411.5 L960.3,410.9 L961.2,410.8 L961.8,411.3 L961.9,412.4 L961.7,414.0 L961.0,416.2 L959.9,418.9 L959.6,420.6 L960.1,421.3 L961.4,421.0 L963.6,419.7 L965.2,418.9 L966.5,418.7 L967.3,418.9 L967.6,419.7 L967.5,420.9 L966.9,422.6 L965.9,424.7 L964.3,427.3 L963.7,429.1 L964.0,430.0 L965.1,430.2 L967.2,429.6 L968.8,429.4 L969.9,429.5 L970.5,430.1 L970.6,431.1 L970.2,432.4 L969.4,434.0 L968.0,435.9 L966.2,438.2 L965.2,439.9 L965.3,441.1 L966.2,441.7 L968.1,441.8 L969.4,442.1 L970.3,442.7 L970.7,443.6 L970.6,444.7 L970.0,446.0 L968.9,447.4 L967.3,449.0 L965.3,450.8 L964.1,452.3 L963.8,453.6 L964.5,454.6 L966.0,455.4 L967.1,456.3 L967.7,457.3 L967.8,458.4 L967.5,459.6 L966.7,460.7 L965.5,461.9 L963.8,463.1 L961.7,464.3 L960.4,465.5 L959.9,466.8 L960.2,468.2 L961.3,469.6 L962.0,471.0 L962.3,472.3 L962.1,473.5 L961.6,474.7 L960.6,475.7 L959.3,476.5 L957.7,477.2 L955.6,477.7 L954.3,478.5 L953.6,479.8 L953.5,481.4 L954.1,483.4 L954.4,485.1 L954.3,486.7 L954.0,488.0 L953.2,489.1 L952.2,489.8 L951.0,490.2 L949.4,490.3 L947.6,490.1 L946.3,490.6 L945.4,491.7 L945.0,493.4 L945.1,495.8 L944.9,497.8 L944.5,499.5 L943.9,500.8 L943.0,501.7 L942.0,502.1 L940.9,502.1 L939.5,501.7 L938.1,500.7 L936.9,500.7 L935.9,501.6 L935.2,503.4 L934.7,506.0 L934.1,508.2 L933.4,509.8 L932.6,511.0 L931.7,511.7 L930.7,511.8 L929.8,511.4 L928.8,510.4 L927.7,508.8 L926.7,508.3 L925.7,508.9 L924.7,510.6 L923.7,513.3 L922.7,515.5 L921.8,517.0 L920.8,518.0 L919.9,518.4 L919.1,518.2 L918.4,517.3 L917.8,515.9 L917.3,513.8 L916.5,512.9 L915.6,513.2 L914.3,514.6 L912.9,517.2 L911.6,519.2 L910.4,520.6 L909.4,521.3 L908.6,521.4 L908.0,520.8 L907.5,519.7 L907.4,517.8 L907.4,515.4 L907.0,514.1 L906.1,514.0 L904.8,515.2 L903.0,517.5 L901.4,519.2 L900.2,520.2 L899.2,520.6 L898.4,520.4 L898.0,519.6 L898.0,518.1 L898.2,516.1 L898.8,513.4 L898.7,511.8 L898.0,511.4 L896.6,512.2 L894.6,514.0 L893.0,515.3 L891.7,516.0 L890.7,516.1 L890.2,515.6 L890.0,514.5 L890.3,512.9 L891.0,510.7 L892.1,508.0 L892.3,506.3 L891.8,505.6 L890.5,505.8 L888.4,507.1 L886.7,507.9 L885.5,508.2 L884.7,507.9 L884.3,507.2 L884.4,505.9 L885.0,504.3 L886.1,502.1 L887.6,499.6 L888.2,497.8 L888.0,496.8 L886.8,496.6 L884.7,497.3 L883.2,497.5 L882.1,497.3 L881.5,496.8 L881.3,495.8 L881.7,494.5 L882.6,492.9 L883.9,490.9 L885.8,488.7 L887.1,487.0 L888.0,485.9 L888.4,485.3 L888.3,485.3 L888.2,485.3 L888.1,485.3 L888.1,485.3 L905.6,475.2 L905.7,476.8 L905.8,478.4 L906.1,479.9 L906.4,481.3 L906.9,482.6 L907.5,483.9 L908.1,485.0 L908.8,486.0 L909.7,486.9 L910.6,487.7 L911.6,488.3 L912.6,488.9 L913.7,489.3 L914.9,489.5 L916.2,489.7 L917.5,489.7 L918.8,489.6 L920.2,489.3 L921.6,488.9 L923.0,488.4 L924.4,487.7 L925.9,487.0 L927.3,486.1 L928.8,485.1 L930.2,484.0 L931.6,482.8 L933.0,481.4 L934.3,480.0 L935.6,478.5 L936.9,477.0 L938.1,475.3 L939.2,473.6 L940.3,471.9 L941.3,470.1 L942.2,468.3 L943.0,466.4 L943.8,464.6 L944.4,462.7 L945.0,460.8 L945.5,459.0 L945.8,457.1 L946.1,455.3 L946.3,453.6 L946.3,451.9 L946.3,450.2 L946.1,448.6 L945.9,447.1 L945.6,445.7 L945.1,444.4 L944.6,443.1 L943.9,442.0 L943.2,441.0 L942.4,440.1 L941.5,439.3 L940.5,438.6 L939.5,438.0 L938.3,437.6 L937.2,437.3 L935.9,437.2 L934.6,437.2 L934.6,426.0 L926.0,431.0 Z" fill="none" stroke="#0a0400" stroke-width="2.00"/>
<path d="M853.6,399.3 L853.6,390.9 L934.6,437.2 L934.6,445.6 Z" fill="#fff" stroke="rgba(96,56,16,0.5)" stroke-width="2.90" shape-rendering="auto"/>
<path d="M853.6,399.3 L853.6,390.9 L934.6,437.2 L934.6,445.6 Z" fill="none" stroke="#0a0400" stroke-width="2.00"/>
<path d="M836.3,388.7 L837.2,388.2 L838.3,387.9 L839.4,387.6 L840.5,387.4 L841.8,387.4 L843.0,387.5 L844.3,387.6 L845.6,387.8 L846.8,388.1 L848.1,388.5 L849.3,388.9 L850.5,389.4 L851.6,389.9 L852.6,390.4 L853.6,390.9 L853.6,399.3 L852.6,398.9 L851.6,398.4 L850.5,398.1 L849.3,397.8 L848.1,397.5 L846.8,397.4 L845.6,397.3 L844.3,397.3 L843.0,397.4 L841.8,397.6 L840.5,397.8 L839.4,398.1 L838.3,398.5 L837.2,398.9 L836.3,399.4 Z" fill="#fff" stroke="rgba(96,56,16,0.5)" stroke-width="2.90" shape-rendering="auto"/>
<path d="M836.3,388.7 L837.2,388.2 L838.3,387.9 L839.4,387.6 L840.5,387.4 L841.8,387.4 L843.0,387.5 L844.3,387.6 L845.6,387.8 L846.8,388.1 L848.1,388.5 L849.3,388.9 L850.5,389.4 L851.6,389.9 L852.6,390.4 L853.6,390.9 L853.6,399.3 L852.6,398.9 L851.6,398.4 L850.5,398.1 L849.3,397.8 L848.1,397.5 L846.8,397.4 L845.6,397.3 L844.3,397.3 L843.0,397.4 L841.8,397.6 L840.5,397.8 L839.4,398.1 L838.3,398.5 L837.2,398.9 L836.3,399.4 Z" fill="none" stroke="#0a0400" stroke-width="2.00"/>
<path d="M836.3,399.4 L837.2,398.9 L838.3,398.5 L839.4,398.1 L840.5,397.8 L841.8,397.6 L843.0,397.4 L844.3,397.3 L845.6,397.3 L846.8,397.4 L848.1,397.5 L849.3,397.8 L850.5,398.1 L851.6,398.4 L852.6,398.9 L853.6,399.3 L934.6,445.6 L926.0,450.6 Z" fill="#fff" stroke="rgba(96,56,16,0.5)" stroke-width="2.90" shape-rendering="auto"/>
<path d="M836.3,399.4 L837.2,398.9 L838.3,398.5 L839.4,398.1 L840.5,397.8 L841.8,397.6 L843.0,397.4 L844.3,397.3 L845.6,397.3 L846.8,397.4 L848.1,397.5 L849.3,397.8 L850.5,398.1 L851.6,398.4 L852.6,398.9 L853.6,399.3 L934.6,445.6 L926.0,450.6 Z" fill="none" stroke="#0a0400" stroke-width="2.00"/>
<path d="M838.5,381.1 L838.5,369.7 L926.0,419.6 L926.0,431.0 Z" fill="#fff" stroke="rgba(96,56,16,0.5)" stroke-width="2.90" shape-rendering="auto"/>
<path d="M838.5,381.1 L838.5,369.7 L926.0,419.6 L926.0,431.0 Z" fill="none" stroke="#0a0400" stroke-width="2.00"/>
<path d="M838.5,378.7 L846.3,374.2" fill="none" stroke="rgba(96,56,16,0.5)" stroke-width="2.90" shape-rendering="auto"/>
<path d="M838.5,378.7 L846.3,374.2" fill="none" stroke="#0a0400" stroke-width="2.00"/>
<path d="M851.2,388.2 L860.9,382.5" fill="none" stroke="rgba(96,56,16,0.5)" stroke-width="2.90" shape-rendering="auto"/>
<path d="M851.2,388.2 L860.9,382.5" fill="none" stroke="#0a0400" stroke-width="2.00"/>
<path d="M865.8,396.6 L875.5,390.9" fill="none" stroke="rgba(96,56,16,0.5)" stroke-width="2.90" shape-rendering="auto"/>
<path d="M865.8,396.6 L875.5,390.9" fill="none" stroke="#0a0400" stroke-width="2.00"/>
<path d="M880.4,404.9 L890.2,399.2" fill="none" stroke="rgba(96,56,16,0.5)" stroke-width="2.90" shape-rendering="auto"/>
<path d="M880.4,404.9 L890.2,399.2" fill="none" stroke="#0a0400" stroke-width="2.00"/>
<path d="M895.0,413.3 L904.8,407.6" fill="none" stroke="rgba(96,56,16,0.5)" stroke-width="2.90" shape-rendering="auto"/>
<path d="M895.0,413.3 L904.8,407.6" fill="none" stroke="#0a0400" stroke-width="2.00"/>
<path d="M909.7,421.6 L919.4,415.9" fill="none" stroke="rgba(96,56,16,0.5)" stroke-width="2.90" shape-rendering="auto"/>
<path d="M909.7,421.6 L919.4,415.9" fill="none" stroke="#0a0400" stroke-width="2.00"/>
<path d="M924.3,430.0 L925.8,429.1" fill="none" stroke="rgba(96,56,16,0.5)" stroke-width="2.90" shape-rendering="auto"/>
<path d="M924.3,430.0 L925.8,429.1" fill="none" stroke="#0a0400" stroke-width="2.00"/>
<path d="M647.3,304.3 L647.3,282.3 L716.2,321.7 L716.2,311.9 L792.8,355.6 L792.8,363.9 L836.3,388.7 L836.3,399.4 L926.0,450.6 L926.0,456.1 L838.5,406.2 L838.5,413.5 Z" fill="#fff" stroke="rgba(96,56,16,0.5)" stroke-width="2.90" shape-rendering="auto"/>
<path d="M647.3,304.3 L647.3,282.3 L716.2,321.7 L716.2,311.9 L792.8,355.6 L792.8,363.9 L836.3,388.7 L836.3,399.4 L926.0,450.6 L926.0,456.1 L838.5,406.2 L838.5,413.5 Z" fill="none" stroke="#0a0400" stroke-width="2.00"/>
<path d="M647.3,304.3 L628.2,315.3 L697.2,354.7 L688.7,359.6 L765.2,403.3 L772.4,399.1 L905.6,475.2 L919.7,467.1 L832.2,417.1 L838.5,413.5 Z" fill="#fff" stroke="rgba(96,56,16,0.5)" stroke-width="2.90" shape-rendering="auto"/>
<path d="M647.3,304.3 L628.2,315.3 L697.2,354.7 L688.7,359.6 L765.2,403.3 L772.4,399.1 L905.6,475.2 L919.7,467.1 L832.2,417.1 L838.5,413.5 Z" fill="none" stroke="#0a0400" stroke-width="2.00"/>
<path d="M647.6,304.5 L666.7,293.4" fill="none" stroke="#0a0400" stroke-width="1.00"/>
<path d="M662.2,312.8 L681.3,301.7" fill="none" stroke="#0a0400" stroke-width="1.00"/>
<path d="M676.8,321.2 L695.9,310.0" fill="none" stroke="#0a0400" stroke-width="1.00"/>
<path d="M691.5,329.5 L710.5,318.4" fill="none" stroke="#0a0400" stroke-width="1.00"/>
<path d="M716.4,315.0 L719.0,313.5" fill="none" stroke="#0a0400" stroke-width="1.00"/>
<path d="M706.1,337.9 L733.6,321.8" fill="none" stroke="#0a0400" stroke-width="1.00"/>
<path d="M720.7,346.2 L748.2,330.2" fill="none" stroke="#0a0400" stroke-width="1.00"/>
<path d="M735.3,354.6 L762.8,338.5" fill="none" stroke="#0a0400" stroke-width="1.00"/>
<path d="M749.9,362.9 L777.4,346.9" fill="none" stroke="#0a0400" stroke-width="1.00"/>
<path d="M764.6,371.3 L792.1,355.2" fill="none" stroke="#0a0400" stroke-width="1.00"/>
<path d="M779.2,379.6 L799.5,367.7" fill="none" stroke="#0a0400" stroke-width="1.00"/>
<path d="M793.8,388.0 L814.2,376.1" fill="none" stroke="#0a0400" stroke-width="1.00"/>
<path d="M808.4,396.3 L828.8,384.4" fill="none" stroke="#0a0400" stroke-width="1.00"/>
<path d="M823.0,404.7 L836.2,396.9" fill="none" stroke="#0a0400" stroke-width="1.00"/>
<path d="M837.7,413.0 L838.3,412.6" fill="none" stroke="#0a0400" stroke-width="1.00"/>
<path d="M844.2,409.2 L848.7,406.6" fill="none" stroke="#0a0400" stroke-width="1.00"/>
<path d="M858.8,417.6 L863.3,414.9" fill="none" stroke="#0a0400" stroke-width="1.00"/>
<path d="M873.4,425.9 L877.9,423.3" fill="none" stroke="#0a0400" stroke-width="1.00"/>
<path d="M888.0,434.3 L892.6,431.6" fill="none" stroke="#0a0400" stroke-width="1.00"/>
<path d="M902.6,442.6 L907.2,439.9" fill="none" stroke="#0a0400" stroke-width="1.00"/>
<path d="M917.3,450.9 L921.8,448.3" fill="none" stroke="#0a0400" stroke-width="1.00"/>
<path d="M647.5,304.5 L647.5,326.4" fill="none" stroke="#000" stroke-width="1" shape-rendering="crispEdges"/>
<path d="M662.5,312.8 L662.5,334.7" fill="none" stroke="#000" stroke-width="1" shape-rendering="crispEdges"/>
<path d="M676.5,321.2 L676.5,343.0" fill="none" stroke="#000" stroke-width="1" shape-rendering="crispEdges"/>
<path d="M691.5,329.5 L691.5,351.4" fill="none" stroke="#000" stroke-width="1" shape-rendering="crispEdges"/>
<path d="M691.5,358.1 L691.5,361.1" fill="none" stroke="#000" stroke-width="1" shape-rendering="crispEdges"/>
<path d="M706.5,337.9 L706.5,369.4" fill="none" stroke="#000" stroke-width="1" shape-rendering="crispEdges"/>
<path d="M720.5,346.2 L720.5,377.8" fill="none" stroke="#000" stroke-width="1" shape-rendering="crispEdges"/>
<path d="M735.5,354.6 L735.5,386.1" fill="none" stroke="#000" stroke-width="1" shape-rendering="crispEdges"/>
<path d="M749.5,362.9 L749.5,394.5" fill="none" stroke="#000" stroke-width="1" shape-rendering="crispEdges"/>
<path d="M764.5,371.3 L764.5,402.8" fill="none" stroke="#000" stroke-width="1" shape-rendering="crispEdges"/>
<path d="M779.5,379.6 L779.5,403.0" fill="none" stroke="#000" stroke-width="1" shape-rendering="crispEdges"/>
<path d="M793.5,388.0 L793.5,411.3" fill="none" stroke="#000" stroke-width="1" shape-rendering="crispEdges"/>
<path d="M808.5,396.3 L808.5,419.7" fill="none" stroke="#000" stroke-width="1" shape-rendering="crispEdges"/>
<path d="M823.5,404.7 L823.5,428.0" fill="none" stroke="#000" stroke-width="1" shape-rendering="crispEdges"/>
<path d="M837.5,413.0 L837.5,413.7" fill="none" stroke="#000" stroke-width="1" shape-rendering="crispEdges"/>
<path d="M837.5,420.5 L837.5,436.4" fill="none" stroke="#000" stroke-width="1" shape-rendering="crispEdges"/>
<path d="M852.5,428.8 L852.5,444.7" fill="none" stroke="#000" stroke-width="1" shape-rendering="crispEdges"/>
<path d="M866.5,437.2 L866.5,453.1" fill="none" stroke="#000" stroke-width="1" shape-rendering="crispEdges"/>
<path d="M881.5,445.5 L881.5,461.4" fill="none" stroke="#000" stroke-width="1" shape-rendering="crispEdges"/>
<path d="M896.5,453.9 L896.5,469.8" fill="none" stroke="#000" stroke-width="1" shape-rendering="crispEdges"/>
<path d="M910.5,462.2 L910.5,472.1" fill="none" stroke="#000" stroke-width="1" shape-rendering="crispEdges"/>
<path d="M647.3,304.3 L838.5,413.5" fill="none" stroke="rgba(96,56,16,0.5)" stroke-width="2.90" shape-rendering="auto"/>
<path d="M647.3,304.3 L838.5,413.5" fill="none" stroke="#0a0400" stroke-width="2.00"/>
<path d="M838.5,406.2 L839.5,405.7 L840.5,405.4 L841.4,405.3 L842.2,405.4 L843.0,405.7 L843.6,406.2 L844.1,406.9 L844.5,407.8 L844.8,408.7 L844.8,409.8 L844.8,411.0 L844.5,412.3 L844.1,413.5 L843.6,414.8 L843.0,416.1 L842.2,417.2 L841.4,418.3 L840.5,419.3 L839.5,420.1 L838.5,420.8 L837.5,421.3 L836.6,421.6 L835.6,421.6 L834.8,421.5 L834.0,421.2 L833.4,420.7 L832.9,420.1 L832.5,419.2 L832.3,418.2 L832.2,417.1 Z" fill="#fff" stroke="rgba(96,56,16,0.5)" stroke-width="2.90" shape-rendering="auto"/>
<path d="M838.5,406.2 L839.5,405.7 L840.5,405.4 L841.4,405.3 L842.2,405.4 L843.0,405.7 L843.6,406.2 L844.1,406.9 L844.5,407.8 L844.8,408.7 L844.8,409.8 L844.8,411.0 L844.5,412.3 L844.1,413.5 L843.6,414.8 L843.0,416.1 L842.2,417.2 L841.4,418.3 L840.5,419.3 L839.5,420.1 L838.5,420.8 L837.5,421.3 L836.6,421.6 L835.6,421.6 L834.8,421.5 L834.0,421.2 L833.4,420.7 L832.9,420.1 L832.5,419.2 L832.3,418.2 L832.2,417.1 Z" fill="none" stroke="#0a0400" stroke-width="2.00"/>
<path d="M926.0,456.1 L927.0,455.6 L927.9,455.4 L928.8,455.3 L929.7,455.4 L930.4,455.7 L931.1,456.2 L931.6,456.9 L932.0,457.7 L932.2,458.7 L932.3,459.8 L932.2,461.0 L932.0,462.2 L931.6,463.5 L931.1,464.8 L930.4,466.0 L929.7,467.2 L928.8,468.3 L927.9,469.2 L927.0,470.1 L926.0,470.7 L925.0,471.2 L924.0,471.5 L923.1,471.6 L922.3,471.5 L921.5,471.2 L920.9,470.7 L920.3,470.0 L920.0,469.2 L919.7,468.2 L919.7,467.1" fill="none" stroke="rgba(96,56,16,0.5)" stroke-width="2.90" shape-rendering="auto"/>
<path d="M926.0,456.1 L927.0,455.6 L927.9,455.4 L928.8,455.3 L929.7,455.4 L930.4,455.7 L931.1,456.2 L931.6,456.9 L932.0,457.7 L932.2,458.7 L932.3,459.8 L932.2,461.0 L932.0,462.2 L931.6,463.5 L931.1,464.8 L930.4,466.0 L929.7,467.2 L928.8,468.3 L927.9,469.2 L927.0,470.1 L926.0,470.7 L925.0,471.2 L924.0,471.5 L923.1,471.6 L922.3,471.5 L921.5,471.2 L920.9,470.7 L920.3,470.0 L920.0,469.2 L919.7,468.2 L919.7,467.1" fill="none" stroke="#0a0400" stroke-width="2.00"/>
<path d="M818.2,425.2 L800.6,435.4 L888.1,485.3 L905.6,475.2 Z" fill="#fff" stroke="rgba(96,56,16,0.5)" stroke-width="2.90" shape-rendering="auto"/>
<path d="M818.2,425.2 L800.6,435.4 L888.1,485.3 L905.6,475.2 Z" fill="none" stroke="#0a0400" stroke-width="2.00"/>
<path d="M808.0,430.9 L808.0,439.8" fill="none" stroke="#0a0400" stroke-width="2" stroke-linecap="butt"/>
<path d="M823.0,428.0 L823.0,448.2" fill="none" stroke="#0a0400" stroke-width="2" stroke-linecap="butt"/>
<path d="M838.0,436.4 L838.0,456.5" fill="none" stroke="#0a0400" stroke-width="2" stroke-linecap="butt"/>
<path d="M852.0,444.7 L852.0,464.9" fill="none" stroke="#0a0400" stroke-width="2" stroke-linecap="butt"/>
<path d="M867.0,453.1 L867.0,473.2" fill="none" stroke="#0a0400" stroke-width="2" stroke-linecap="butt"/>
<path d="M882.0,461.4 L882.0,481.6" fill="none" stroke="#0a0400" stroke-width="2" stroke-linecap="butt"/>
<path d="M896.0,469.8 L896.0,480.5" fill="none" stroke="#0a0400" stroke-width="2" stroke-linecap="butt"/>
<path d="M934.6,437.2 L935.9,437.2 L937.2,437.3 L938.3,437.6 L939.5,438.0 L940.5,438.6 L941.5,439.3 L942.4,440.1 L943.2,441.0 L943.9,442.0 L944.6,443.1 L945.1,444.4 L945.6,445.7 L945.9,447.1 L946.1,448.6 L946.3,450.2 L946.3,451.9 L946.3,453.6 L946.1,455.3 L945.8,457.1 L945.5,459.0 L945.0,460.8 L944.4,462.7 L943.8,464.6 L943.0,466.4 L942.2,468.3 L941.3,470.1 L940.3,471.9 L939.2,473.6 L938.1,475.3 L936.9,477.0 L935.6,478.5 L934.3,480.0 L933.0,481.4 L931.6,482.8 L930.2,484.0 L928.8,485.1 L927.3,486.1 L925.9,487.0 L924.4,487.7 L923.0,488.4 L921.6,488.9 L920.2,489.3 L918.8,489.6 L917.5,489.7 L916.2,489.7 L914.9,489.5 L913.7,489.3 L912.6,488.9 L911.6,488.3 L910.6,487.7 L909.7,486.9 L908.8,486.0 L908.1,485.0 L907.5,483.9 L906.9,482.6 L906.4,481.3 L906.1,479.9 L905.8,478.4 L905.7,476.8 L905.6,475.2" fill="none" stroke="rgba(96,56,16,0.5)" stroke-width="3.70" shape-rendering="auto"/>
<path d="M934.6,437.2 L935.9,437.2 L937.2,437.3 L938.3,437.6 L939.5,438.0 L940.5,438.6 L941.5,439.3 L942.4,440.1 L943.2,441.0 L943.9,442.0 L944.6,443.1 L945.1,444.4 L945.6,445.7 L945.9,447.1 L946.1,448.6 L946.3,450.2 L946.3,451.9 L946.3,453.6 L946.1,455.3 L945.8,457.1 L945.5,459.0 L945.0,460.8 L944.4,462.7 L943.8,464.6 L943.0,466.4 L942.2,468.3 L941.3,470.1 L940.3,471.9 L939.2,473.6 L938.1,475.3 L936.9,477.0 L935.6,478.5 L934.3,480.0 L933.0,481.4 L931.6,482.8 L930.2,484.0 L928.8,485.1 L927.3,486.1 L925.9,487.0 L924.4,487.7 L923.0,488.4 L921.6,488.9 L920.2,489.3 L918.8,489.6 L917.5,489.7 L916.2,489.7 L914.9,489.5 L913.7,489.3 L912.6,488.9 L911.6,488.3 L910.6,487.7 L909.7,486.9 L908.8,486.0 L908.1,485.0 L907.5,483.9 L906.9,482.6 L906.4,481.3 L906.1,479.9 L905.8,478.4 L905.7,476.8 L905.6,475.2" fill="none" stroke="#0a0400" stroke-width="2.80"/>
</g>

</svg>


<!-- ===== status bar ===== -->
<div class="a" style="left:1px;top:693px;width:1126px;height:23px;background:#f0f0f0"></div>
<div class="a" style="left:1px;top:692px;width:366px;height:1px;background:#dcdcdc"></div>
<span class="t" style="left:7.00px;top:699.50px;font-size:11px;line-height:11px;letter-spacing:-0.198px;color:#111;">Valmiina (Opaste: paina F1)</span>
<span class="t" style="left:921.00px;top:699.50px;font-size:11px;line-height:11px;letter-spacing:-0.016px;color:#111;">dx 1.14</span>
<span class="t" style="left:991.00px;top:699.50px;font-size:11px;line-height:11px;letter-spacing:-0.029px;color:#111;">dy 36.77</span>
<span class="t" style="left:1061.00px;top:699.50px;font-size:11px;line-height:11px;letter-spacing:-0.054px;color:#111;">dr 36.78</span>
<div class="a" style="left:906px;top:695px;width:1px;height:20px;background:#d9d9d9"></div>
<div class="a" style="left:986px;top:695px;width:1px;height:20px;background:#d9d9d9"></div>
<div class="a" style="left:1056px;top:695px;width:1px;height:20px;background:#d9d9d9"></div>
<svg style="left:1114px;top:704px" width="12" height="12" viewBox="0 0 12 12" shape-rendering="crispEdges"><g fill="#bdbdbd"><rect x="8" y="0" width="2" height="2"/><rect x="5" y="3" width="2" height="2"/><rect x="8" y="3" width="2" height="2"/><rect x="2" y="6" width="2" height="2"/><rect x="5" y="6" width="2" height="2"/><rect x="8" y="6" width="2" height="2"/></g></svg>


</div></div>
</body>
</html>
